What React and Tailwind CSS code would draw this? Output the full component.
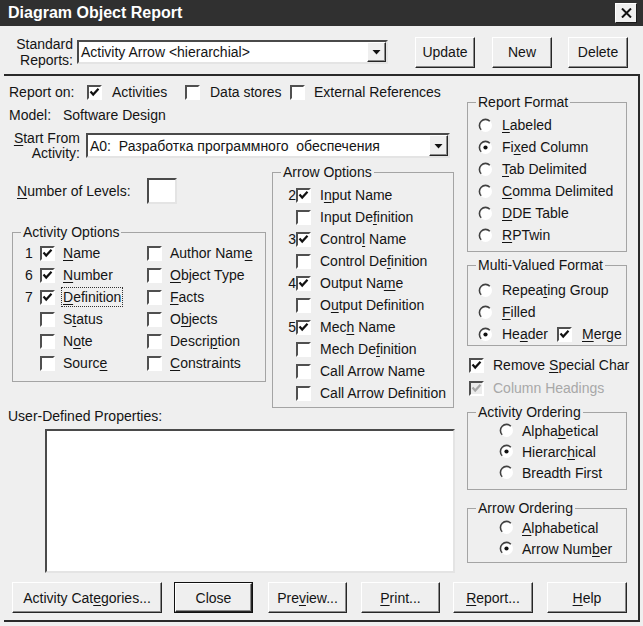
import React from "react";

// accelerator letters: "&" marks the underlined char
function Acc({ text }) {
  const i = text.indexOf("&");
  if (i < 0) return <>{text}</>;
  return (
    <>
      {text.slice(0, i)}
      <span className="underline decoration-1 underline-offset-[2px]">{text[i + 1]}</span>
      {text.slice(i + 2)}
    </>
  );
}

function Check({ on, dim }) {
  return (
    <span
      className={
        "w-[15px] h-[15px] shrink-0 flex items-center justify-center border-2 border-t-[#505050] border-l-[#505050] border-r-white border-b-white " +
        (dim ? "bg-[#ececec]" : "bg-white")
      }
    >
      {on && (
        <svg width="11" height="11" viewBox="0 0 11 11">
          <path d="M1.5 4.5L4.2 7.5L9.5 1.8" fill="none" stroke={dim ? "#a8a8a8" : "#111"} strokeWidth="2.2" />
        </svg>
      )}
    </span>
  );
}

function Radio({ on }) {
  return (
    <svg width="15" height="15" viewBox="0 0 15 15" className="shrink-0">
      <circle cx="7.5" cy="7.5" r="6.5" fill="#fff" />
      <path d="M3.2 11.8A6 6 0 0 1 11.8 3.2" fill="none" stroke="#404040" strokeWidth="1.6" />
      {on && <circle cx="7.5" cy="7.5" r="2.1" fill="#111" />}
    </svg>
  );
}

function Group({ title, className, children }) {
  return (
    <fieldset className={"border border-[#a4a4a4] " + className}>
      <legend className="ml-[8px] px-[2px] leading-[16px]">{title}</legend>
      {children}
    </fieldset>
  );
}

function Btn({ children, className, def }) {
  const inner = (
    <div className="w-full h-full flex items-center justify-center border border-t-white border-l-white border-r-[#262626] border-b-[#262626] shadow-[inset_-1px_-1px_0_#8a8a8a]">
      {children}
    </div>
  );
  if (def) return <div className={"h-[31px] border border-[#111] " + className}>{inner}</div>;
  return <div className={"h-[31px] " + className}>{inner}</div>;
}

function Sunken({ className, children }) {
  return (
    <div className={"bg-white border-2 border-t-[#4a4a4a] border-l-[#4a4a4a] border-r-[#e4e4e4] border-b-[#e4e4e4] " + className}>
      {children}
    </div>
  );
}

function DropBtn() {
  return (
    <div className="w-[19px] h-full flex items-center justify-center bg-[#efefef] border border-t-white border-l-white border-r-[#262626] border-b-[#262626] shadow-[inset_-1px_-1px_0_#8a8a8a]">
      <svg width="9" height="6" viewBox="0 0 9 6">
        <path d="M0.5 1h8L4.5 5.5z" fill="#111" />
      </svg>
    </div>
  );
}

const activityLeft = [
  ["1", "&Name", true],
  ["6", "&Number", true],
  ["7", "&Definition", true, true],
  ["", "S&tatus"],
  ["", "N&ote"],
  ["", "Sourc&e"],
];
const activityRight = ["Author Nam&e", "&Object Type", "&Facts", "O&bjects", "Descri&ption", "&Constraints"];

const arrowOpts = [
  ["2", "I&nput Name", true],
  ["", "Input De&finition"],
  ["3", "Contro&l Name", true],
  ["", "Control De&finition"],
  ["4", "Output Na&me", true],
  ["", "O&utput Definition"],
  ["5", "Mec&h Name", true],
  ["", "Mech De&finition"],
  ["", "Call Arrow Name"],
  ["", "Call Arrow Definition"],
];

const formats = ["&Labeled", "Fi&xed Column", "&Tab Delimited", "&Comma Delimited", "&DDE Table", "&RPTwin"];

export default function App() {
  return (
    <div className="w-[643px] h-[626px] overflow-hidden bg-[#efefef] text-[#141414] text-[14px] leading-[16px] font-['Liberation_Sans',Arial,sans-serif]">
      {/* title bar */}
      <div className="h-[26px] bg-[#303030] flex items-center justify-between">
        <span className="pl-[8px] text-white font-bold text-[16px]">Diagram Object Report</span>
        <div className="mr-[6px] w-[22px] h-[20px] flex items-center justify-center bg-[#efefef] border border-t-white border-l-white border-r-[#1a1a1a] border-b-[#1a1a1a]">
          <svg width="11" height="10" viewBox="0 0 11 10">
            <path d="M1 0.5L10 9.5M10 0.5L1 9.5" stroke="#111" strokeWidth="2" />
          </svg>
        </div>
      </div>

      {/* standard reports row */}
      <div className="h-[48px] pt-[4px] pl-[4px] flex items-center">
        <div className="w-[69px] text-right leading-[16px]">
          <div>Standard</div>
          <div>Reports:</div>
        </div>
        <Sunken className="ml-[4px] w-[311px] h-[24px] flex items-center">
          <span className="pl-[2px] flex-1">Activity Arrow &lt;hierarchial&gt;</span>
          <DropBtn />
        </Sunken>
        <Btn className="ml-[27px] w-[60px] h-[30px]">Update</Btn>
        <Btn className="ml-[17px] w-[60px] h-[30px]">New</Btn>
        <Btn className="ml-[16px] w-[60px] h-[30px]">Delete</Btn>
      </div>

      {/* main pane */}
      <div className="ml-[4px] mr-[3px] h-[548px] border-t-2 border-r-2 border-b-2 border-[#2a2a2a] flex flex-col">
        <div className="flex items-start">
          {/* left column */}
          <div className="w-[463px] shrink-0 flex flex-col">
            <div className="mt-[6px] h-[20px] pl-[5px] flex items-center whitespace-nowrap">
              <span className="w-[78px]">Report on:</span>
              <Check on />
              <span className="ml-[10px] w-[73px]">Activities</span>
              <Check />
              <span className="ml-[10px] w-[80px]">Data stores</span>
              <Check />
              <span className="ml-[9px]">External References</span>
            </div>
            <div className="mt-[3px] h-[20px] pl-[5px] flex items-center">
              <span className="w-[54px]">Model:</span>
              <span>Software Design</span>
            </div>
            <div className="mt-[8px] h-[25px] flex items-center">
              <div className="w-[76px] text-right leading-[15px]">
                <div><Acc text="&Start From" /></div>
                <div>Activity:</div>
              </div>
              <Sunken className="ml-[6px] w-[364px] h-[25px] flex items-center">
                <span className="pl-[2px] flex-1 whitespace-pre">A0:  Разработка программного  обеспечения</span>
                <DropBtn />
              </Sunken>
            </div>

            <div className="flex items-start">
              <div className="w-[268px] shrink-0 flex flex-col">
                <div className="mt-[20px] h-[26px] flex items-center">
                  <span className="pl-[13px] w-[143px]"><Acc text="&Number of Levels:" /></span>
                  <Sunken className="w-[30px] h-[26px]" />
                </div>
                <Group title="Activity Options" className="mt-[20px] ml-[8px] w-[254px] pb-[7px]">
                  <div className="mt-[2px] flex flex-col">
                    {activityLeft.map(([n, label, on, focus], i) => (
                      <div key={i} className="h-[22px] pl-[12px] flex items-center whitespace-nowrap">
                        <span className="w-[15px]">{n}</span>
                        <Check on={on} />
                        <span className="ml-[8px] w-[84px]">
                          <span className={focus ? "outline-1 outline-dotted outline-[#333] outline-offset-[1px]" : ""}>
                            <Acc text={label} />
                          </span>
                        </span>
                        <Check />
                        <span className="ml-[8px]"><Acc text={activityRight[i]} /></span>
                      </div>
                    ))}
                  </div>
                </Group>
              </div>
              <Group title="Arrow Options" className="mt-[6px] w-[182px] pb-[3px]">
                <div className="mt-[4px] flex flex-col">
                  {arrowOpts.map(([n, label, on], i) => (
                    <div key={i} className="h-[22px] flex items-center whitespace-nowrap">
                      <span className="w-[23px] text-right">{n}</span>
                      <Check on={on} />
                      <span className="ml-[9px]"><Acc text={label} /></span>
                    </div>
                  ))}
                </div>
              </Group>
            </div>

            <div className="pl-[4px] leading-[16px]">User-Defined Properties:</div>
            <Sunken className="mt-[5px] ml-[41px] w-[410px] h-[144px]" />
          </div>

          {/* right column */}
          <div className="flex-1 flex flex-col whitespace-nowrap">
            <Group title="Report Format" className="mt-[18px] w-[160px] pb-[5px]">
              <div className="mt-[4px] flex flex-col">
                {formats.map((f, i) => (
                  <div key={i} className="h-[22px] pl-[10px] flex items-center">
                    <Radio on={i === 1} />
                    <span className="ml-[9px]"><Acc text={f} /></span>
                  </div>
                ))}
              </div>
            </Group>
            <Group title="Multi-Valued Format" className="mt-[5px] w-[160px]">
              <div className="mt-[6px] flex flex-col">
                <div className="h-[22px] pl-[10px] flex items-center">
                  <Radio />
                  <span className="ml-[9px]"><Acc text="Repea&ting Group" /></span>
                </div>
                <div className="h-[22px] pl-[10px] flex items-center">
                  <Radio />
                  <span className="ml-[9px]"><Acc text="&Filled" /></span>
                </div>
                <div className="h-[22px] pl-[10px] flex items-center">
                  <Radio on />
                  <span className="ml-[9px] w-[55px]"><Acc text="He&ader" /></span>
                  <Check on />
                  <span className="ml-[10px]"><Acc text="&Merge" /></span>
                </div>
              </div>
            </Group>
            <div className="mt-[8px] h-[22px] pl-[2px] flex items-center">
              <Check on />
              <span className="ml-[9px]"><Acc text="Remove &Special Char" /></span>
            </div>
            <div className="mt-[1px] h-[22px] pl-[2px] flex items-center text-[#a8a8a8]">
              <Check on dim />
              <span className="ml-[9px]">Column Headings</span>
            </div>
            <Group title="Activity Ordering" className="mt-[5px] w-[160px] pb-[6px]">
              <div className="flex flex-col">
                {["Alpha&betical", "Hierarc&hical", "Breadth First"].map((t, i) => (
                  <div key={i} className="h-[21px] pl-[31px] flex items-center">
                    <Radio on={i === 1} />
                    <span className="ml-[8px]"><Acc text={t} /></span>
                  </div>
                ))}
              </div>
            </Group>
            <Group title="Arrow Ordering" className="mt-[10px] w-[160px] pb-[3px]">
              <div className="mt-[1px] flex flex-col">
                {["&Alphabetical", "Arrow Num&ber"].map((t, i) => (
                  <div key={i} className="h-[21px] pl-[31px] flex items-center">
                    <Radio on={i === 1} />
                    <span className="ml-[8px]"><Acc text={t} /></span>
                  </div>
                ))}
              </div>
            </Group>
          </div>
        </div>

        {/* bottom buttons */}
        <div className="mt-[9px] pl-[8px] flex">
          <Btn className="w-[150px]"><Acc text="Activity Cat&egories..." /></Btn>
          <Btn def className="ml-[12px] w-[79px]">Close</Btn>
          <Btn className="ml-[15px] w-[79px]"><Acc text="Pre&view..." /></Btn>
          <Btn className="ml-[14px] w-[79px]"><Acc text="&Print..." /></Btn>
          <Btn className="ml-[13px] w-[80px]"><Acc text="&Report..." /></Btn>
          <Btn className="ml-[14px] w-[80px]"><Acc text="&Help" /></Btn>
        </div>
      </div>
    </div>
  );
}
